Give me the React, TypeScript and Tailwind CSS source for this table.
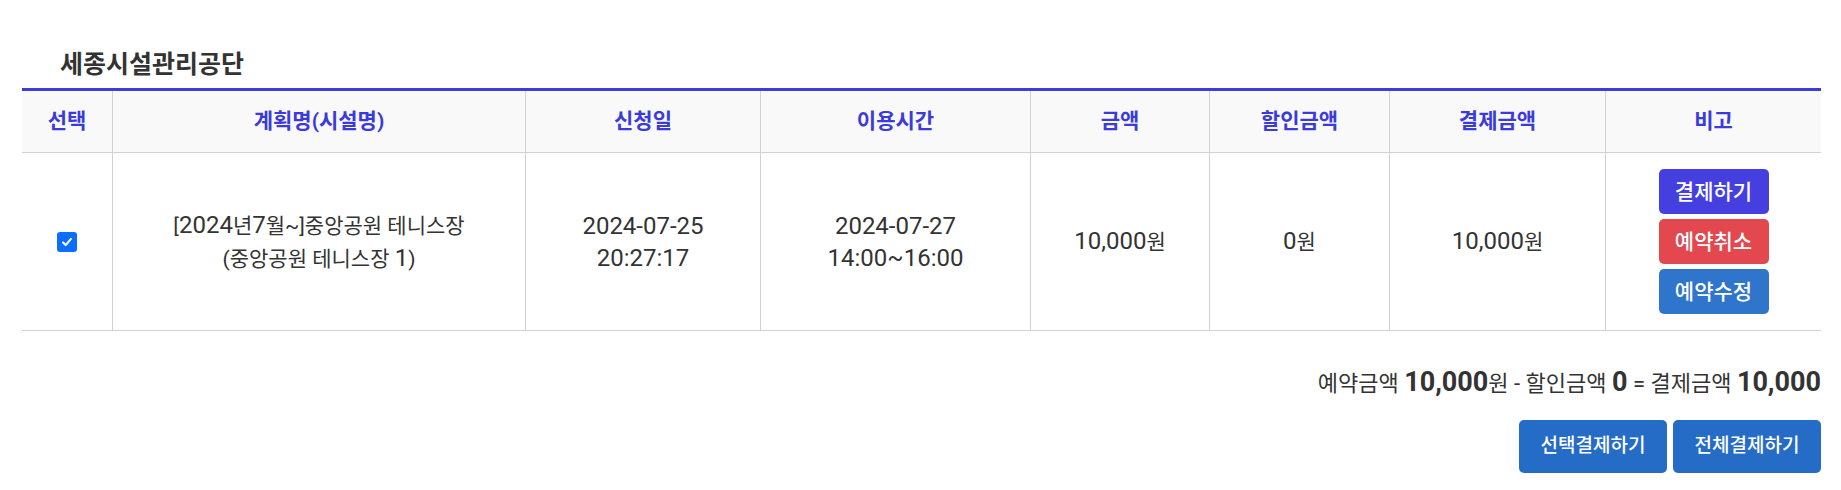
const headers = ['선택', '계획명(시설명)', '신청일', '이용시간', '금액', '할인금액', '결제금액', '비고'];

function CheckBox() {
  return (
    <span className="flex h-[20px] w-[20px] items-center justify-center rounded-[3px] bg-[#0b6efd]">
      <svg viewBox="0 0 16 16" className="h-[14px] w-[14px]" fill="none">
        <path d="M3.5 8.5l3 3 6-7" stroke="white" strokeWidth="2.4" strokeLinecap="round" strokeLinejoin="round" />
      </svg>
    </span>
  );
}

// digits in the reference run wider than the hangul, so they get a larger size
function N({ children }: { children: React.ReactNode }) {
  return <span className="text-[24px]">{children}</span>;
}

export default function App() {
  const cell = 'flex items-center justify-center text-center border-r border-[#d2d2d2]';
  const rowBtn = 'h-[45px] w-[110px] rounded-[5px] text-[21px] font-medium text-white';
  const bottomBtn = 'h-[53px] w-[148px] rounded-[5px] bg-[#256cc6] text-[19px] font-medium text-white';
  return (
    <div className="min-h-screen bg-white pl-[22px] pr-[20px] pt-[47px] font-['Roboto','Noto_Sans_CJK_KR',sans-serif] text-[#333]">
      <h2 className="ml-[38px] mb-[5px] text-[25px] font-bold leading-[36px] text-[#333]">
        세종시설관리공단
      </h2>

      <div className="border-t-[3px] border-[#3d3ddf]">
        <div className="grid grid-cols-[91fr_413fr_235fr_270fr_179fr_180fr_216fr_215fr] h-[62px] bg-[#f9f9f9] border-b border-[#d2d2d2]">
          {headers.map((h, i) => (
            <div
              key={h}
              className={`flex items-center justify-center text-[21px] font-bold text-[#3b3bdc] ${i < headers.length - 1 ? 'border-r border-[#d2d2d2]' : ''}`}
            >
              {h}
            </div>
          ))}
        </div>

        <div className="grid grid-cols-[91fr_413fr_235fr_270fr_179fr_180fr_216fr_215fr] h-[178px] border-b border-[#d2d2d2] text-[21px] leading-[32px]">
          <div className={cell}>
            <CheckBox />
          </div>
          <div className={cell}>
            <div>
              [<N>2024</N>년<N>7</N>월~]중앙공원 테니스장
              <br />
              (중앙공원 테니스장 <N>1</N>)
            </div>
          </div>
          <div className={`${cell} text-[24px]`}>
            <div>
              2024-07-25
              <br />
              20:27:17
            </div>
          </div>
          <div className={`${cell} text-[24px]`}>
            <div>
              2024-07-27
              <br />
              14:00~16:00
            </div>
          </div>
          <div className={cell}>
            <div>
              <N>10,000</N>원
            </div>
          </div>
          <div className={cell}>
            <div>
              <N>0</N>원
            </div>
          </div>
          <div className={cell}>
            <div>
              <N>10,000</N>원
            </div>
          </div>
          <div className="flex flex-col items-center justify-center gap-[5px]">
            <button className={`${rowBtn} bg-[#463fe0]`}>결제하기</button>
            <button className={`${rowBtn} bg-[#e2484e]`}>예약취소</button>
            <button className={`${rowBtn} bg-[#2f75cc]`}>예약수정</button>
          </div>
        </div>
      </div>

      <div className="mt-[33px] flex items-baseline justify-end text-[22px] leading-[36px] text-[#333]">
        <span>예약금액&nbsp;</span>
        <b className="text-[27px] font-bold">10,000</b>
        <span>원 - 할인금액&nbsp;</span>
        <b className="text-[27px] font-bold">0</b>
        <span>&nbsp;= 결제금액&nbsp;</span>
        <b className="text-[27px] font-bold">10,000</b>
      </div>

      <div className="mt-[18px] flex justify-end gap-[6px]">
        <button className={bottomBtn}>선택결제하기</button>
        <button className={bottomBtn}>전체결제하기</button>
      </div>
    </div>
  );
}
